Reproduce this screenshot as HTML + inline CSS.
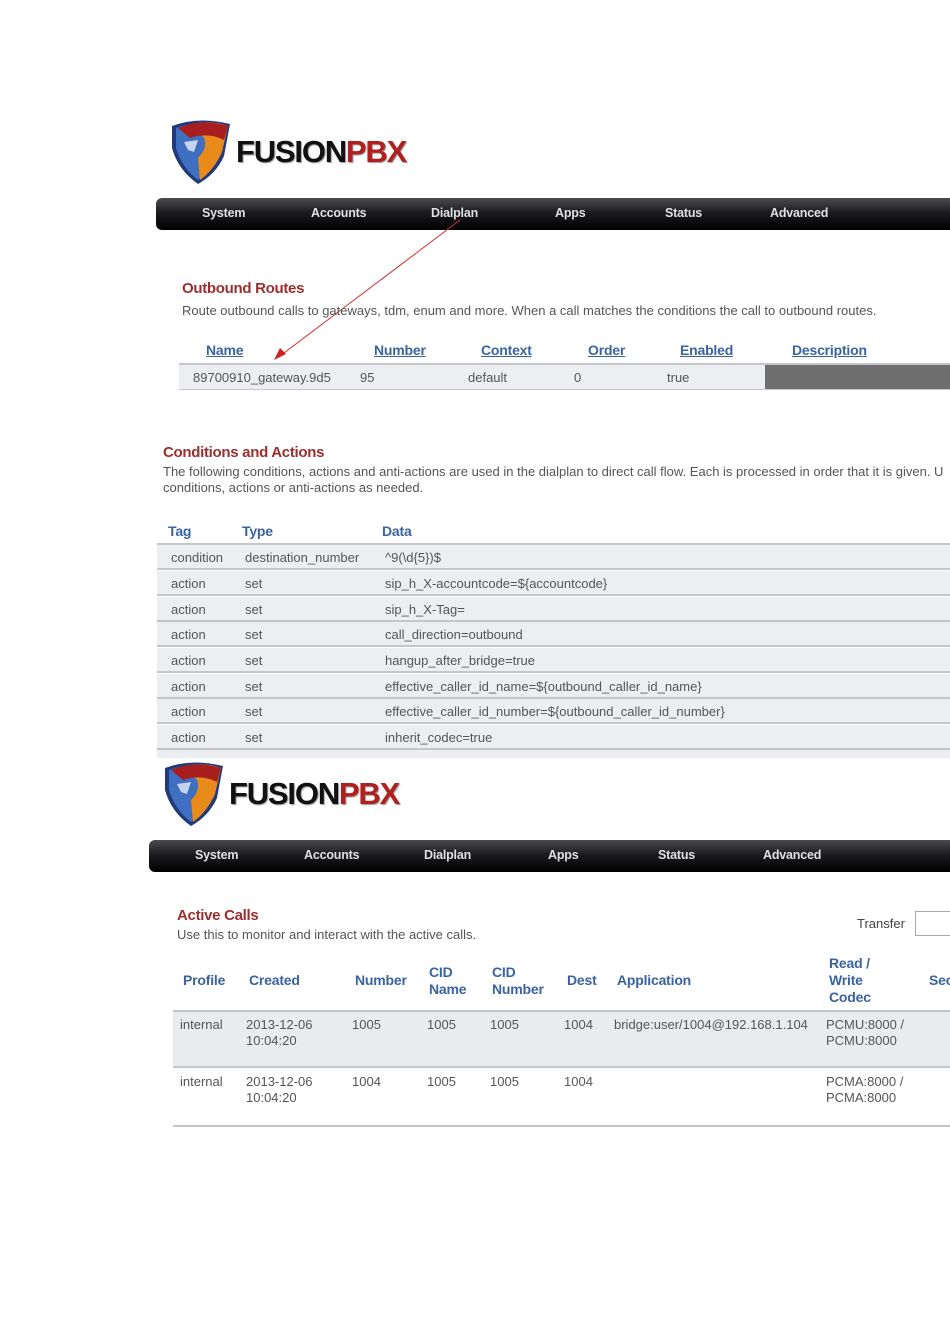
<!DOCTYPE html>
<html><head><meta charset="utf-8"><style>
*{margin:0;padding:0;box-sizing:border-box}
body{width:950px;height:1344px;background:#fff;position:relative;overflow:hidden;font-family:"Liberation Sans",Arial,sans-serif;color:#555}
.a{position:absolute;white-space:nowrap}
.nav{position:absolute;height:32px;right:0;background:linear-gradient(#4a4a50,#1c1c20 45%,#000);border-radius:6px 0 0 6px}
.nav span{position:absolute;top:8px;color:#e0e0e0;font-weight:bold;font-size:12.5px;letter-spacing:-0.2px}
.ttl{color:#9b2f2f;font-weight:bold;font-size:15px;letter-spacing:-0.3px}
.txt{font-size:13px;color:#555;letter-spacing:0}
.hd{color:#3a64a0;font-weight:bold;font-size:14px;letter-spacing:-0.2px}
.u{text-decoration:underline}
.row{position:absolute;left:157px;right:0;height:25px;background:#eceef1;border-bottom:2px solid #c4c6c9}
.row span{position:absolute;top:5px;font-size:13px;color:#555}
.logo{position:absolute;width:240px;height:70px}
.logo .f{position:absolute;left:68px;top:16px;font-size:31px;font-weight:bold;letter-spacing:-1.2px;color:#111;text-shadow:1px 1px 1px #999}
.logo .f b{color:#b02020}
</style></head><body>

<div class="logo" style="left:168px;top:118px">
<svg width="66" height="68" viewBox="0 0 66 68">
<path d="M4 8 Q30 -2 62 6 L56 38 Q48 56 30 66 Q10 52 4 30Z" fill="#223a7a"/>
<path d="M8 10 Q30 2 58 8 L52 36 Q44 52 30 62 Q14 50 8 30Z" fill="#3e6fc0"/>
<path d="M24 6 Q44 2 60 8 L54 34 Q46 52 32 62 L30 40 Q40 30 36 20Z" fill="#e88b1a"/>
<path d="M10 10 Q34 0 60 8 L56 22 Q40 14 22 20 Z" fill="#a81e1e"/>
<path d="M16 24 L30 22 L26 34 L20 32Z" fill="#fff" opacity=".7"/>
</svg>
<div class="f">FUSION<b>PBX</b></div>
</div>

<div class="nav" style="left:156px;top:198px">
<span style="left:46px">System</span><span style="left:155px">Accounts</span><span style="left:275px">Dialplan</span><span style="left:399px">Apps</span><span style="left:509px">Status</span><span style="left:614px">Advanced</span>
</div>

<svg class="a" style="left:0;top:0" width="950" height="400"><line x1="460" y1="220" x2="280" y2="356" stroke="#d03030" stroke-width="1"/><polygon points="274,360 280,348 286,354" fill="#d02020"/></svg>

<div class="a ttl" style="left:182px;top:280px">Outbound Routes</div>
<div class="a txt" style="left:182px;top:303px">Route outbound calls to gateways, tdm, enum and more. When a call matches the conditions the call to outbound routes.</div>
<div class="a hd u" style="left:206px;top:342px">Name</div>
<div class="a hd u" style="left:374px;top:342px">Number</div>
<div class="a hd u" style="left:481px;top:342px">Context</div>
<div class="a hd u" style="left:588px;top:342px">Order</div>
<div class="a hd u" style="left:680px;top:342px">Enabled</div>
<div class="a hd u" style="left:792px;top:342px">Description</div>
<div class="row" style="left:179px;top:363px;height:27px;border-top:2px solid #c4c6c9;border-bottom:1px solid #c4c6c9">
<span style="left:14px">89700910_gateway.9d5</span><span style="left:181px">95</span><span style="left:289px">default</span><span style="left:395px">0</span><span style="left:488px">true</span>
<div style="position:absolute;left:586px;top:0;right:0;height:100%;background:#6e6e6e"></div>
</div>

<div class="a ttl" style="left:163px;top:444px">Conditions and Actions</div>
<div class="a txt" style="left:163px;top:464px">The following conditions, actions and anti-actions are used in the dialplan to direct call flow. Each is processed in order that it is given. U</div>
<div class="a txt" style="left:163px;top:480px">conditions, actions or anti-actions as needed.</div>
<div class="a hd" style="left:168px;top:523px">Tag</div>
<div class="a hd" style="left:242px;top:523px">Type</div>
<div class="a hd" style="left:382px;top:523px">Data</div>
<div class="a" style="left:157px;right:0;top:543px;height:2px;background:#c4c6c9"></div>

<div class="row" style="top:545px"><span style="left:14px">condition</span><span style="left:88px">destination_number</span><span style="left:228px">^9(\d{5})$</span></div>
<div class="row" style="top:571px"><span style="left:14px">action</span><span style="left:88px">set</span><span style="left:228px">sip_h_X-accountcode=${accountcode}</span></div>
<div class="row" style="top:597px"><span style="left:14px">action</span><span style="left:88px">set</span><span style="left:228px">sip_h_X-Tag=</span></div>
<div class="row" style="top:622px"><span style="left:14px">action</span><span style="left:88px">set</span><span style="left:228px">call_direction=outbound</span></div>
<div class="row" style="top:648px"><span style="left:14px">action</span><span style="left:88px">set</span><span style="left:228px">hangup_after_bridge=true</span></div>
<div class="row" style="top:674px"><span style="left:14px">action</span><span style="left:88px">set</span><span style="left:228px">effective_caller_id_name=${outbound_caller_id_name}</span></div>
<div class="row" style="top:699px"><span style="left:14px">action</span><span style="left:88px">set</span><span style="left:228px">effective_caller_id_number=${outbound_caller_id_number}</span></div>
<div class="row" style="top:725px"><span style="left:14px">action</span><span style="left:88px">set</span><span style="left:228px">inherit_codec=true</span></div>
<div class="row" style="top:750px;height:8px;border:none"></div>

<div class="logo" style="left:161px;top:760px">
<svg width="66" height="68" viewBox="0 0 66 68">
<path d="M4 8 Q30 -2 62 6 L56 38 Q48 56 30 66 Q10 52 4 30Z" fill="#223a7a"/>
<path d="M8 10 Q30 2 58 8 L52 36 Q44 52 30 62 Q14 50 8 30Z" fill="#3e6fc0"/>
<path d="M24 6 Q44 2 60 8 L54 34 Q46 52 32 62 L30 40 Q40 30 36 20Z" fill="#e88b1a"/>
<path d="M10 10 Q34 0 60 8 L56 22 Q40 14 22 20 Z" fill="#a81e1e"/>
<path d="M16 24 L30 22 L26 34 L20 32Z" fill="#fff" opacity=".7"/>
</svg>
<div class="f">FUSION<b>PBX</b></div>
</div>

<div class="nav" style="left:149px;top:840px">
<span style="left:46px">System</span><span style="left:155px">Accounts</span><span style="left:275px">Dialplan</span><span style="left:399px">Apps</span><span style="left:509px">Status</span><span style="left:614px">Advanced</span>
</div>

<div class="a ttl" style="left:177px;top:907px">Active Calls</div>
<div class="a txt" style="left:177px;top:927px">Use this to monitor and interact with the active calls.</div>
<div class="a txt" style="left:857px;top:916px;color:#444">Transfer</div>
<div class="a" style="left:915px;top:911px;width:40px;height:25px;border:1px solid #aaa;background:#fff"></div>

<div class="a hd" style="left:183px;top:972px">Profile</div>
<div class="a hd" style="left:249px;top:972px">Created</div>
<div class="a hd" style="left:355px;top:972px">Number</div>
<div class="a hd" style="left:429px;top:964px;line-height:17px">CID<br>Name</div>
<div class="a hd" style="left:492px;top:964px;line-height:17px">CID<br>Number</div>
<div class="a hd" style="left:567px;top:972px">Dest</div>
<div class="a hd" style="left:617px;top:972px">Application</div>
<div class="a hd" style="left:829px;top:955px;line-height:17px">Read /<br>Write<br>Codec</div>
<div class="a hd" style="left:929px;top:972px">Sec</div>

<div class="a" style="left:173px;right:0;top:1010px;height:58px;background:#e9ebef;border-top:2px solid #c4c6c9;border-bottom:2px solid #c4c6c9"></div>
<div class="a" style="left:173px;right:0;top:1125px;height:2px;background:#c4c6c9"></div>

<div class="a txt" style="left:180px;top:1017px;line-height:16px">internal</div>
<div class="a txt" style="left:246px;top:1017px;line-height:16px">2013-12-06<br>10:04:20</div>
<div class="a txt" style="left:352px;top:1017px">1005</div>
<div class="a txt" style="left:427px;top:1017px">1005</div>
<div class="a txt" style="left:490px;top:1017px">1005</div>
<div class="a txt" style="left:564px;top:1017px">1004</div>
<div class="a txt" style="left:614px;top:1017px">bridge:user/1004@192.168.1.104</div>
<div class="a txt" style="left:826px;top:1017px;line-height:16px">PCMU:8000 /<br>PCMU:8000</div>

<div class="a txt" style="left:180px;top:1074px;line-height:16px">internal</div>
<div class="a txt" style="left:246px;top:1074px;line-height:16px">2013-12-06<br>10:04:20</div>
<div class="a txt" style="left:352px;top:1074px">1004</div>
<div class="a txt" style="left:427px;top:1074px">1005</div>
<div class="a txt" style="left:490px;top:1074px">1005</div>
<div class="a txt" style="left:564px;top:1074px">1004</div>
<div class="a txt" style="left:826px;top:1074px;line-height:16px">PCMA:8000 /<br>PCMA:8000</div>

</body></html>
